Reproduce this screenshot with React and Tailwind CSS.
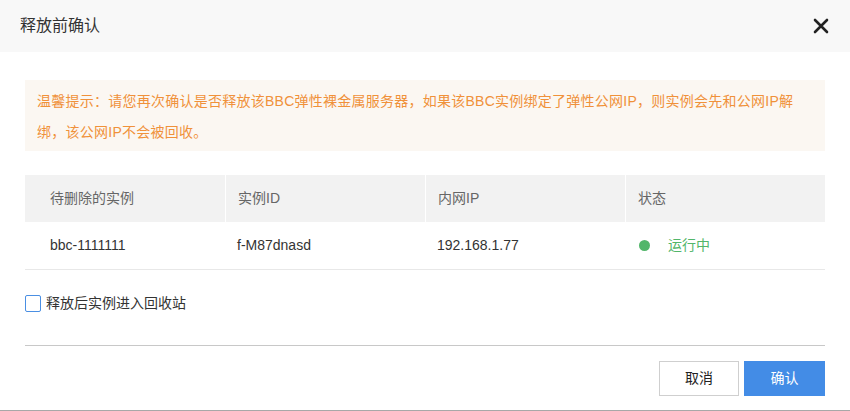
const rows = [
  { name: "bbc-1111111", id: "f-M87dnasd", ip: "192.168.1.77", status: "运行中" },
];

const font = {
  fontFamily: '"Liberation Sans", "Noto Sans CJK SC", sans-serif',
};

const CloseIcon = () => (
  <svg width="16" height="16" viewBox="0 0 16 16" fill="none">
    <path d="M2 2 L14 14 M14 2 L2 14" stroke="#222" strokeWidth="2.6" strokeLinecap="round" />
  </svg>
);

export default function App() {
  return (
    <div className="w-[850px] h-[411px] bg-white flex flex-col border-b border-[#a8a8a8] overflow-hidden" style={font}>
      <div className="h-[52px] bg-[#f8f8f8] flex items-center justify-between pl-5 pr-[21px] shrink-0">
        <span className="text-[16px] text-[#333]">释放前确认</span>
        <button className="flex items-center justify-center">
          <CloseIcon />
        </button>
      </div>

      <div className="px-[25px] flex flex-col">
        <div className="mt-[28px] bg-[#fbf7f2] px-3 pt-[6px] pb-[3px] text-[14px] leading-[31px] tracking-[0.25px] text-[#f0913a]">
          温馨提示：请您再次确认是否释放该BBC弹性裸金属服务器，如果该BBC实例绑定了弹性公网IP，则实例会先和公网IP解
          <br />
          绑，该公网IP不会被回收。
        </div>

        <div className="mt-[24px] text-[14px]">
          <div className="grid grid-cols-4 h-[47px] bg-[#f2f2f2] text-[#666]">
            <div className="flex items-center pl-[25px]">待删除的实例</div>
            <div className="flex items-center pl-3 border-l border-white">实例ID</div>
            <div className="flex items-center pl-3 border-l border-white">内网IP</div>
            <div className="flex items-center pl-3 border-l border-white">状态</div>
          </div>
          {rows.map((r) => (
            <div key={r.id} className="grid grid-cols-4 h-[48px] border-b border-[#e8e8e8] text-[#333]">
              <div className="flex items-center pl-[25px]">{r.name}</div>
              <div className="flex items-center pl-3">{r.id}</div>
              <div className="flex items-center pl-3">{r.ip}</div>
              <div className="flex items-center pl-[14px]">
                <span className="w-[11px] h-[11px] rounded-full bg-[#52b66a]" />
                <span className="ml-[18px] text-[#52b66a]">{r.status}</span>
              </div>
            </div>
          ))}
        </div>

        <label className="mt-[25px] flex items-center h-[17px] text-[14px] text-[#333]">
          <span className="w-[16px] h-[17px] border-[1.5px] border-[#4a8fe3] rounded-[2px] bg-white" />
          <span className="ml-[5px]">释放后实例进入回收站</span>
        </label>

        <div className="mt-[33px] h-px bg-[#c8c8c8]" />

        <div className="mt-[15px] flex justify-end gap-[5px]">
          <button className="w-[80px] h-[35px] border border-[#cfcfcf] bg-white text-[14px] text-[#222]">
            取消
          </button>
          <button className="w-[81px] h-[35px] bg-[#438ce6] text-[14px] text-white">
            确认
          </button>
        </div>
      </div>
    </div>
  );
}
